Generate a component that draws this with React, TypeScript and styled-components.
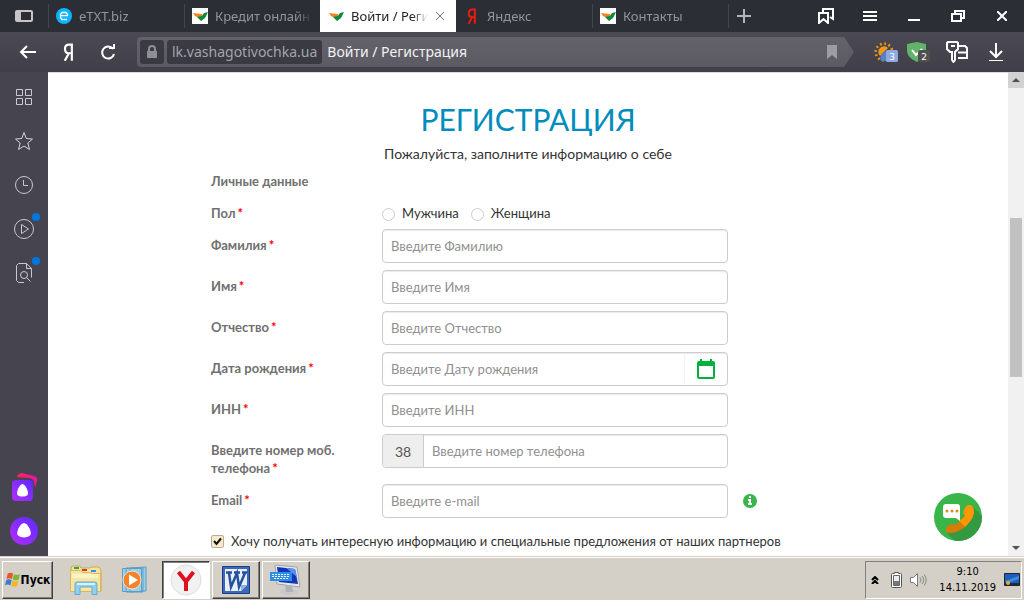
import React from 'react';
import styled, { createGlobalStyle, css } from 'styled-components';

const Global = createGlobalStyle`
  *, *::before, *::after { box-sizing: border-box; }
  html, body { margin: 0; padding: 0; }
  body { font-family: "Lato", "Liberation Sans", sans-serif; font-size: 13px; color: #333; background: #fff; }
  button { font: inherit; color: inherit; margin: 0; padding: 0; border: 0; background: none; display: inline-flex; align-items: center; justify-content: center; }
  a { color: inherit; text-decoration: none; }
  svg { display: block; flex: none; }
`;

const chromeFont = css`font-family: "Noto Sans", "Open Sans", sans-serif;`;

const Screen = styled.div`
  display: flex;
  flex-direction: column;
  min-height: 100vh;
`;

/* ---------- tab strip ---------- */
const TabStrip = styled.header`
  ${chromeFont}
  display: flex;
  height: 32px;
  background: #2c2e36;
`;
const PanelButton = styled.button`
  width: 48px;
  flex: none;
`;
const Tabs = styled.nav`
  display: flex;
  flex: 1;
  min-width: 0;
  max-width: 680px;
`;
const Tab = styled.a<{ $active?: boolean; $line?: boolean }>`
  flex: 1 1 136px;
  min-width: 0;
  display: flex;
  align-items: center;
  gap: 7px;
  padding: 0 ${p => (p.$active ? 11 : 8)}px 0 8px;
  font-size: 13px;
  color: ${p => (p.$active ? '#222' : '#94959b')};
  background: ${p => (p.$active ? '#fff' : 'linear-gradient(#44464e, #44464e) left center / 1px 24px no-repeat')};
  ${p => p.$line === false && 'background: none;'}
`;
const TabIcon = styled.span`
  width: 16px;
  flex: none;
  display: flex;
  justify-content: center;
`;
const TabTitle = styled.span`
  flex: 1;
  min-width: 0;
  overflow: hidden;
  white-space: nowrap;
  mask-image: linear-gradient(to right, #000 calc(100% - 16px), transparent);
`;
const NewTab = styled.button`
  width: 32px;
  flex: none;
  background: linear-gradient(#44464e, #44464e) left center / 1px 24px no-repeat;
`;
const WindowButtons = styled.div`
  display: flex;
  margin-left: auto;
  button { width: 44px; }
`;

/* ---------- toolbar ---------- */
const Toolbar = styled.div`
  ${chromeFont}
  display: flex;
  align-items: center;
  height: 40px;
  padding: 0 12px 0 8px;
  background: linear-gradient(#4b4a54, #403f48);
`;
const ToolButton = styled.button`
  width: 40px;
  height: 32px;
`;
const AddressBar = styled.div`
  flex: 1;
  min-width: 0;
  display: flex;
  align-items: center;
  gap: 3px;
  height: 30px;
  margin-left: 9px;
  padding: 0 17px 0 3px;
  border-radius: 4px 0 0 4px;
  background: linear-gradient(#63626b, #5c5b63);
  clip-path: polygon(0 0, calc(100% - 10px) 0, 100% 50%, calc(100% - 10px) 100%, 0 100%);
`;
const Lock = styled.span`
  display: flex;
  align-items: center;
  justify-content: center;
  width: 24px;
  height: 24px;
  border-radius: 3px;
  background: #3a3a43;
`;
const Domain = styled.span`
  height: 24px;
  padding: 0 5px;
  line-height: 24px;
  font-size: 14px;
  border-radius: 3px;
  color: #a4a4aa;
  background: #3a3a43;
`;
const PageName = styled.span`
  flex: 1;
  padding-left: 2px;
  font-size: 14px;
  line-height: 24px;
  color: #f2f2f4;
  white-space: nowrap;
`;
const Extensions = styled.div`
  display: grid;
  grid-template-columns: 32px 32px 46px 32px;
  margin-left: 16px;
  button { height: 32px; }
`;

/* ---------- body ---------- */
const Body = styled.div`
  flex: 1;
  display: flex;
  min-height: 0;
`;
const Sidebar = styled.aside`
  width: 48px;
  flex: none;
  display: flex;
  flex-direction: column;
  align-items: center;
  padding: 7px 0;
  gap: 8px;
  background: #46454f;
  button { width: 32px; height: 36px; position: relative; }
`;
const Dot = styled.i`
  position: absolute;
  top: 2px;
  right: 0;
  width: 8px;
  height: 8px;
  border-radius: 50%;
  background: #0077de;
`;
const Spacer = styled.div`flex: 1;`;
const Page = styled.main`
  position: relative;
  flex: 1;
  min-width: 0;
  border-top: 1px solid #dcdcdc;
  padding: 24px 16px 0;
  background: #fff;
`;
const Title = styled.h1`
  margin: 0;
  font-size: 30px;
  line-height: 44px;
  font-weight: 400;
  text-align: center;
  color: #008dbd;
`;
const Lead = styled.p`
  margin: 3px 0 0;
  font-size: 14px;
  line-height: 20px;
  text-align: center;
`;
const Form = styled.form`
  max-width: 634px;
  margin: 0 auto;
`;
const Section = styled.h2`
  margin: 8px 0 14px;
  font-size: 13px;
  line-height: 18px;
  font-weight: 700;
  color: #707070;
`;
const FormRow = styled.div<{ $gap?: number }>`
  display: grid;
  grid-template-columns: 171px 346px 1fr;
  align-items: start;
  margin-bottom: ${p => p.$gap ?? 7}px;
`;
const labelText = css`
  font-size: 13px;
  line-height: 18px;
  font-weight: 700;
  color: #707070;
`;
const FieldLabel = styled.label`
  ${labelText}
  padding: 7px 24px 0 0;
`;
const GroupLabel = styled.span`${labelText}`;
const Star = styled.span`
  margin-left: 2px;
  color: #f00;
`;
const Box = styled.div`
  display: flex;
  height: 34px;
  overflow: hidden;
  border: 1px solid #ccc;
  border-radius: 4px;
  background: #fff;
  box-shadow: inset 0 1px 1px rgba(0, 0, 0, 0.08);
`;
const Input = styled.input`
  flex: 1;
  min-width: 0;
  padding: 0 8px;
  border: 0;
  outline: 0;
  background: none;
  font: 13px "Lato", sans-serif;
  color: #555;
  &::placeholder { color: #909090; opacity: 1; }
`;
const Prefix = styled.span`
  width: 41px;
  display: flex;
  align-items: center;
  justify-content: center;
  border-right: 1px solid #ccc;
  background: #eee;
  font-size: 14px;
  color: #555;
`;
const DateButton = styled.button`
  width: 43px;
  padding-right: 1px;
  border-left: 1px solid #f4f4f4;
`;
const InfoButton = styled.button`
  width: 14px;
  height: 34px;
  margin-left: 15px;
`;
const Choices = styled.div`
  display: flex;
  gap: 12px;
`;
const Choice = styled.label`
  display: flex;
  align-items: center;
  gap: 7px;
  font-size: 13px;
  line-height: 18px;
`;
const Radio = styled.input`
  appearance: none;
  width: 13px;
  height: 13px;
  margin: 2px 0 0;
  border: 1px solid #ccc;
  border-radius: 50%;
  background: #fff;
  &:checked { border: 4px solid #39b54a; }
`;
const Agree = styled.label`
  display: flex;
  align-items: center;
  gap: 7px;
  font-size: 13px;
  line-height: 18px;
  white-space: nowrap;
`;
const Check = styled.span`
  display: grid;
  width: 13px;
  height: 13px;
  > * { grid-area: 1 / 1; margin: 0; }
  svg { visibility: hidden; pointer-events: none; }
  input:checked + svg { visibility: visible; }
`;
const CheckInput = styled.input`
  appearance: none;
  width: 13px;
  height: 13px;
  border: 1px solid #b9ad98;
  border-radius: 2px;
  background: #fbe9cb;
`;
const CallButton = styled.button`
  position: absolute;
  right: 26px;
  bottom: 15px;
`;
const Scrollbar = styled.div`
  width: 16px;
  flex: none;
  display: flex;
  flex-direction: column;
  background: #f1f1f1;
  button { height: 16px; }
`;
const ScrollUp = styled.button`background: #d2d2d2;`;
const Track = styled.div`
  flex: 1;
  display: grid;
  grid-template-rows: 130fr 159fr 163fr;
`;
const Thumb = styled.div`
  grid-row: 2;
  margin: 0 2px;
  background: #c1c1c1;
`;

/* ---------- taskbar ---------- */
const Taskbar = styled.footer`
  display: flex;
  align-items: center;
  height: 44px;
  padding: 2px 0 0 2px;
  background: #d4d0c8;
  border-top: 1px solid #d4d0c8;
  box-shadow: inset 0 1px 0 #fff;
  font-family: "DejaVu Sans Condensed", "DejaVu Sans", sans-serif;
  color: #000;
`;
const Start = styled.button`
  width: 51px;
  height: 38px;
  gap: 1px;
  font-size: 12px;
  font-weight: 700;
  border: 1px solid;
  border-color: #fff #404040 #404040 #fff;
  box-shadow: inset -1px -1px 0 #808080;
`;
const Launch = styled.div`
  display: flex;
  gap: 2px;
  margin: 0 2px 0 9px;
  button { width: 48px; height: 38px; }
`;
const TaskButton = styled.button<{ $active?: boolean }>`
  width: 48px;
  height: 38px;
  margin-right: 2px;
  border: 1px solid;
  border-color: ${p => (p.$active ? '#404040 #fff #fff #404040' : '#fff #404040 #404040 #fff')};
  box-shadow: ${p => (p.$active ? 'inset 1px 1px 0 #808080' : 'inset -1px -1px 0 #808080')};
  background: ${p => (p.$active ? '#fff' : '#d4d0c8')};
`;
const Tray = styled.div`
  display: flex;
  align-items: center;
  height: 38px;
  margin: 0 2px 0 auto;
  padding: 0 1px 0 5px;
  gap: 8px;
  border: 1px solid;
  border-color: #808080 #fff #fff #808080;
`;
const TrayToggle = styled.button`
  margin-right: 4px;
`;
const Clock = styled.time`
  margin-left: 4px;
  font-size: 11px;
  line-height: 16px;
  text-align: center;
`;

/* ---------- drawings ---------- */
const Bird = () => (
  <svg width="16" height="16" viewBox="0 0 16 16">
    <path fill="#fff" d="M0 0h16v16H0z" />
    <path fill="#f58220" d="M1 5l9 1 1 2-4 2-4-2z" />
    <path fill="#0a8a3c" d="M5 9l5-1 2-3 4-1-3 6-4 3z" />
  </svg>
);
const Etxt = () => (
  <svg width="16" height="16" viewBox="0 0 16 16">
    <circle cx="8" cy="8" r="8" fill="#0ab4ff" />
    <path fill="none" stroke="#fff" strokeWidth="1.3" d="M4.5 7.7h7V6.500L10 4.500H6L4.500 6.500v3L6 11.500h5" />
  </svg>
);
const Ya = ({ color, size = 18 }: { color: string; size?: number }) => (
  <svg width={size * 0.6} height={size} viewBox="0 0 11 18">
    <path fill="none" stroke={color} strokeWidth="2.200" d="M9 18V1.500H6.500C3 1.500 2 3.500 2 6s1.200 4.300 4 4.300H9M6 10.300L1.800 18" />
  </svg>
);
const Stroke = ({ size = 18, w = 2, color = '#fff', d }: { size?: number; w?: number; color?: string; d: string }) => (
  <svg width={size} height={size} viewBox={`0 0 ${size} ${size}`} fill="none" stroke={color} strokeWidth={w}>
    <path d={d} />
  </svg>
);
const Weather = () => (
  <svg width="24" height="20" viewBox="0 0 24 20">
    <circle cx="10" cy="10" r="8.300" fill="none" stroke="#f59a10" strokeWidth="2.600" strokeDasharray="1.700 2.650" />
    <path d="M6 14a5 5 0 0 1 8-8z" fill="#f59a10" />
    <path d="M7 19a7 7 0 0 1 6-10v10z" fill="#5b7fc4" />
    <rect x="12" y="8" width="12" height="12" rx="1.500" fill="#90a9e2" />
    <text x="18" y="18" fill="#fff" fontFamily="DejaVu Sans" fontSize="9" textAnchor="middle">3</text>
  </svg>
);
const Shield = () => (
  <svg width="24" height="20" viewBox="0 0 24 20">
    <path d="M1 2l10-2 9 2v6c0 6-4 9-9 12C5 17 1 14 1 8z" fill="#62b26c" />
    <path d="M6 8l4 5 6-6" fill="none" stroke="#fff" strokeWidth="2" />
    <rect x="12" y="8" width="12" height="12" rx="2" fill="#505050" />
    <text x="18" y="18" fill="#fff" fontFamily="DejaVu Sans" fontSize="9" textAnchor="middle">2</text>
  </svg>
);
const KeyIcon = () => (
  <svg width="22" height="22" viewBox="0 0 22 22" fill="none" stroke="#fff" strokeWidth="2">
    <path d="M2 1h9l1 1v6l-3 3v8l-1.500 2L6 19v-8H4L1 8V2z" />
    <path d="M5 5h4M13 5h6l2 2v10h-9M12 11.500h9" />
  </svg>
);
const Alice = ({ square }: { square?: boolean }) => (
  <svg width="28" height="28" viewBox="0 0 28 28">
    <defs>
      <linearGradient id="violet" x1="1" y1="0" x2="0" y2="1"><stop offset="0" stopColor="#5a2cff" /><stop offset="1" stopColor="#b52cff" /></linearGradient>
      <linearGradient id="pink"><stop offset="0" stopColor="#ff2560" /><stop offset="1" stopColor="#f010a8" /></linearGradient>
    </defs>
    {square ? (
      <>
        <path fill="url(#pink)" d="M7 4Q8 0 12 0l12 3q4 1 3 5l-2 7-1-7q-1-2-4-3z" />
        <rect x="2" y="7" width="21" height="21" rx="4" fill="url(#violet)" />
        <path fill="#fff" d="M12.500 11c3 0 7 9 5 11s-8 2-10 0 2-11 5-11z" />
      </>
    ) : (
      <>
        <circle cx="14" cy="14" r="14" fill="url(#violet)" />
        <path fill="#fff" d="M14 6c3.500 0 9 10 6 12.500s-9 2.500-12 0S10.500 6 14 6z" />
      </>
    )}
  </svg>
);
const Calendar = () => (
  <svg width="18" height="20" viewBox="0 0 18 20">
    <path fill="#00b140" fillRule="evenodd" d="M3 0h2v2h8V0h2v2h1a2 2 0 0 1 2 2v14a2 2 0 0 1-2 2H2a2 2 0 0 1-2-2V4a2 2 0 0 1 2-2h1zM2 7v11h14V7z" />
  </svg>
);
const Info = () => (
  <svg width="14" height="14" viewBox="0 0 14 14">
    <circle cx="7" cy="7" r="7" fill="#39b54a" />
    <path fill="#fff" d="M6 2h2v2H6zM5 5h3v4h1v2H5V9h1V7H5z" />
  </svg>
);
const Phone = () => (
  <svg width="48" height="48" viewBox="0 0 48 48">
    <defs><clipPath id="disc"><circle cx="24" cy="24" r="24" /></clipPath></defs>
    <circle cx="24" cy="24" r="24" fill="#39b54a" />
    <path clipPath="url(#disc)" fill="#339a42" d="M38 13l14 14v26H26L13 40l13-12z" />
    <path fill="#ff9800" d="M35 12q5 0 5 7c0 5-4 10-9 15l-6-6c3-2 5-4 6-6-2-1-2-3-1-5q2-5 5-5z" />
    <path fill="#d97b06" d="M25 28l6 6c-5 4-10 6-16 6q-4-1-3-4 2-5 6-5l3 1c2-1 3-2 4-4z" />
    <path fill="#fff" d="M12 11h11q3 0 3 3v14l-4-3H12q-3 0-3-3v-8q0-3 3-3z" />
    <g fill="#e68a1a"><circle cx="13" cy="18" r="1.500" /><circle cx="18" cy="18" r="1.500" /><circle cx="23" cy="18" r="1.500" /></g>
  </svg>
);
const Flag = () => (
  <svg width="15" height="15" viewBox="0 0 14 14">
    <path fill="#e8562a" d="M2.500 1.500q2.500-1.500 5 0L6.500 6.500Q4 5 1.500 6.500z" />
    <path fill="#7ab83c" d="M8.200 2q2.800 1.500 5.800 0l-1.200 5q-2.800 1.500-5.600 0z" />
    <path fill="#3b7ad0" d="M1.200 7.500q2.500-1.500 5 0l-1.200 5q-2.500-1.500-5 0z" />
    <path fill="#f4b81e" d="M7 8q2.800 1.500 5.600 0l-1.200 5q-2.800 1.500-5.600 0z" />
  </svg>
);
const Folder = () => (
  <svg width="34" height="32" viewBox="0 0 34 32">
    <path fill="#f5e3a0" stroke="#cda84c" d="M2 4l1-2h8l1 2h9l1-1h8l2 3v21H2z" />
    <path fill="#2ca24c" d="M5 3h5v2H5z" /><path fill="#d03a2c" d="M13 5h5v2h-5z" /><path fill="#3b8ede" d="M22 6h5v2h-5z" />
    <path fill="#f7e6a2" stroke="#d9b85c" d="M1.500 6.500h10l2 2h8l2 1h8v18h-30z" />
    <path fill="#fbf3c8" d="M3 10h26v4H3z" />
    <path fill="#8fd0f0" stroke="#68a9d0" d="M6 30.500V20q0-2 2-2h18q2 0 2 2v10.500h-5V23H11v7.500z" />
    <path fill="#d8f1fc" d="M8 19h18v2H8z" />
  </svg>
);
const Player = () => (
  <svg width="30" height="28" viewBox="0 0 30 28">
    <path fill="#9cd0ea" stroke="#5d9dc4" d="M9 2l16-1v24l-16 1zM5 2h17v24H5zM1.500 2.500h19v23h-19z" />
    <circle cx="11" cy="14" r="9" fill="#f58226" stroke="#e6e6e6" /><path fill="#fff" d="M8 8.500l9 5.500-9 5.500z" />
  </svg>
);
const Yandex = () => (
  <svg width="32" height="32" viewBox="0 0 32 32">
    <circle cx="16" cy="16" r="15" fill="#f1f1f1" stroke="#ddd" />
    <path d="M8.500 8l7.500 9.500L23.500 8M16 17v10" fill="none" stroke="#e01020" strokeWidth="4" />
  </svg>
);
const Word = () => (
  <svg width="28" height="28" viewBox="0 0 28 28">
    <path fill="#3c68b8" stroke="#1d3c80" d="M.5.500h27v27H.500z" />
    <path fill="#e8effa" d="M3 3h22v16l-6 6H3z" /><path fill="#8fb0e4" d="M19 25v-6h6z" />
    <path d="M4 6.500h6M12 6.500h6M20 6.500h5M7 7l2 14 6-14 2 14 6-14" fill="none" stroke="#2450a0" strokeWidth="2.500" />
  </svg>
);
const Keyboard = () => (
  <svg width="32" height="32" viewBox="0 0 32 32">
    <path fill="#e4e6ea" stroke="#a0a4aa" d="M5 1l22 2 3 20-23-3z" />
    <path fill="#1236b8" d="M7 3l18 2 3 15-19-2z" /><path fill="#5b8cf0" d="M16 4l9 1 2 8z" />
    <ellipse cx="19" cy="28" rx="9" ry="3" fill="#c6c8cc" /><path fill="#b0b4ba" d="M15 21h7l1 7h-7z" />
    <path fill="#2e8ee6" d="M0 8h22v9H0z" />
    <path stroke="#fff" strokeDasharray="2 1" d="M2 10.500h18M2 12.500h18M4 14.500h14" />
  </svg>
);
const Battery = () => (
  <svg width="11" height="16" viewBox="0 0 11 16">
    <path fill="#fff" stroke="#555" d="M3.500.500h4v1h2a1 1 0 0 1 1 1v12a1 1 0 0 1-1 1h-8a1 1 0 0 1-1-1v-12a1 1 0 0 1 1-1h2z" />
    <path fill="#eee" stroke="#666" d="M2.500 3.500h6v10h-6z" /><path fill="#777" d="M3 9h5v4H3z" />
  </svg>
);
const Speaker = () => (
  <svg width="17" height="16" viewBox="0 0 17 16">
    <path fill="#fff" stroke="#777" d="M.500 5.500h3l4-4v13l-4-4h-3z" />
    <path fill="none" stroke="#888" d="M10 5.500q2 2.500 0 5M12 4q3.500 4 0 8M14 2.500q4.500 5.500 0 11" />
  </svg>
);
const Desk = () => (
  <svg width="16" height="13" viewBox="0 0 16 13">
    <path fill="#1d5fc0" stroke="#222" d="M.500.500h15v12H.500z" /><path fill="#3f8ade" d="M1 8l14-5v3L4 10z" />
    <path fill="#1a2a4a" d="M1 10h14v2H1z" /><circle cx="4" cy="10" r="2" fill="#e6b020" />
  </svg>
);

const tabs = [
  { title: 'eTXT.biz', icon: <Etxt /> },
  { title: 'Кредит онлайн н', icon: <Bird /> },
  { title: 'Войти / Регистрация', icon: <Bird />, active: true },
  { title: 'Яндекс', icon: <Ya color="#f21a0c" size={16} />, line: false },
  { title: 'Контакты', icon: <Bird /> },
];

const TextRow = ({ id, label, hint, gap, prefix, inner, after }: {
  id: string; label: string; hint: string; gap?: number;
  prefix?: string; inner?: React.ReactNode; after?: React.ReactNode;
}) => (
  <FormRow $gap={gap}>
    <FieldLabel htmlFor={id}>{label}<Star>*</Star></FieldLabel>
    <Box>
      {prefix && <Prefix>{prefix}</Prefix>}
      <Input id={id} placeholder={hint} />
      {inner}
    </Box>
    {after}
  </FormRow>
);

export default function App() {
  return (
    <Screen>
      <Global />
      <TabStrip>
        <PanelButton aria-label="Панель">
          <svg width="18" height="12" viewBox="0 0 18 12"><path fill="#c8c5c8" fillRule="evenodd" d="M2 0h14a2 2 0 0 1 2 2v8a2 2 0 0 1-2 2H2a2 2 0 0 1-2-2V2a2 2 0 0 1 2-2zm4 2v8h10V2z" /></svg>
        </PanelButton>
        <Tabs>
          {tabs.map(t => (
            <Tab key={t.title} href="#" $active={t.active} $line={t.line}>
              <TabIcon>{t.icon}</TabIcon>
              <TabTitle>{t.title}</TabTitle>
              {t.active && <Stroke size={10} w={1} color="#777" d="M1 1l8 8M9 1l-8 8" />}
            </Tab>
          ))}
        </Tabs>
        <NewTab aria-label="Новая вкладка"><Stroke size={14} w={2} color="#b5b5ba" d="M7 0v14M0 7h14" /></NewTab>
        <WindowButtons>
          <button aria-label="Закладки"><Stroke size={16} w={2} d="M1 5h9v10l-4.500-4L1 15zM5 4V1h10v10l-3-2" /></button>
          <button aria-label="Меню"><Stroke size={14} w={2} d="M0 3h14M0 7h14M0 11h14" /></button>
          <button aria-label="Свернуть"><Stroke size={12} w={2} d="M0 10h12" /></button>
          <button aria-label="Развернуть"><Stroke size={14} w={2} d="M1 5h9v7H1zM4 4V2h9v7h-2" /></button>
          <button aria-label="Закрыть"><Stroke size={10} w={2} d="M0 0l10 10M10 0L0 10" /></button>
        </WindowButtons>
      </TabStrip>

      <Toolbar>
        <ToolButton aria-label="Назад"><Stroke d="M17 9H2M8 3L2 9l6 6" /></ToolButton>
        <ToolButton aria-label="Яндекс"><Ya color="#fff" /></ToolButton>
        <ToolButton aria-label="Обновить"><Stroke w={2} d="M14 6A6 6 0 1 0 15 11M10 5h5V1" /></ToolButton>
        <AddressBar>
          <Lock><svg width="10" height="14" viewBox="0 0 10 14"><path fill="#8e8e96" fillRule="evenodd" d="M1 6V4a4 4 0 0 1 8 0v2h1v7H0V6zm2 0h4V4a2 2 0 0 0-4 0z" /></svg></Lock>
          <Domain>lk.vashagotivochka.ua</Domain>
          <PageName>Войти / Регистрация</PageName>
          <svg width="10" height="14" viewBox="0 0 10 14"><path fill="#9d9ca2" d="M0 0h10v14l-5-4-5 4z" /></svg>
        </AddressBar>
        <Extensions>
          <button aria-label="Погода"><Weather /></button>
          <button aria-label="Защита"><Shield /></button>
          <button aria-label="Пароли"><KeyIcon /></button>
          <button aria-label="Загрузки"><Stroke d="M9 0v13M3 8l6 6 6-6M2 18h14" /></button>
        </Extensions>
      </Toolbar>

      <Body>
        <Sidebar>
          <button aria-label="Табло"><Stroke size={18} w={1} color="#c9c9ce" d="M1.500 1.500h6v6h-6zM10.500 1.500h6v6h-6zM1.500 10.500h6v6h-6zM10.500 10.500h6v6h-6z" /></button>
          <button aria-label="Избранное"><Stroke size={18} w={1} color="#d4d4d8" d="M9 .500l2.300 6 6.200.5-4.700 4 1.700 6.500L9 14l-5.500 3.500L5.200 11 .500 7l6.200-.5z" /></button>
          <button aria-label="История"><Stroke size={18} w={1} color="#c9c9ce" d="M9 .500a8.500 8.500 0 1 1 0 17a8.500 8.500 0 0 1 0-17M8.500 4v5.500H13" /></button>
          <button aria-label="Видео"><Stroke size={20} w={1} color="#c9c9ce" d="M10 .500a9.500 9.500 0 1 1 0 19a9.500 9.500 0 0 1 0-19M7.500 5.500v9l7-4.500z" /><Dot /></button>
          <button aria-label="Поиск"><Stroke size={20} w={1} color="#c9c9ce" d="M10 19.500H4.500l-2-2v-15l2-2h8l5 5v9M12.500.500v5h5M10 8.500a3.500 3.500 0 1 1 0 7a3.500 3.500 0 0 1 0-7M12.500 14.500l4 4" /><Dot /></button>
          <Spacer />
          <button aria-label="Коллекции"><Alice square /></button>
          <button aria-label="Алиса"><Alice /></button>
        </Sidebar>

        <Page>
          <Title>РЕГИСТРАЦИЯ</Title>
          <Lead>Пожалуйста, заполните информацию о себе</Lead>
          <Form>
            <Section>Личные данные</Section>
            <FormRow role="radiogroup" aria-labelledby="sex">
              <GroupLabel id="sex">Пол<Star>*</Star></GroupLabel>
              <Choices>
                <Choice><Radio type="radio" name="sex" />Мужчина</Choice>
                <Choice><Radio type="radio" name="sex" />Женщина</Choice>
              </Choices>
            </FormRow>
            <TextRow id="surname" label="Фамилия" hint="Введите Фамилию" />
            <TextRow id="name" label="Имя" hint="Введите Имя" />
            <TextRow id="patronymic" label="Отчество" hint="Введите Отчество" />
            <TextRow id="birth" label="Дата рождения" hint="Введите Дату рождения"
              inner={<DateButton type="button" aria-label="Календарь"><Calendar /></DateButton>} />
            <TextRow id="inn" label="ИНН" hint="Введите ИНН" />
            <TextRow id="phone" label="Введите номер моб. телефона" hint="Введите номер телефона" prefix="38" />
            <TextRow id="email" label="Email" hint="Введите e-mail" gap={14}
              after={<InfoButton type="button" aria-label="Подсказка"><Info /></InfoButton>} />
            <Agree>
              <Check>
                <CheckInput type="checkbox" defaultChecked />
                <Stroke size={13} w={2} color="#111" d="M3 6l2.500 3L10 3.500" />
              </Check>
              Хочу получать интересную информацию и специальные предложения от наших партнеров
            </Agree>
          </Form>
          <CallButton aria-label="Позвонить"><Phone /></CallButton>
        </Page>

        <Scrollbar>
          <ScrollUp aria-label="Вверх"><svg width="8" height="4" viewBox="0 0 8 4"><path fill="#505050" d="M0 4l4-4 4 4z" /></svg></ScrollUp>
          <Track><Thumb /></Track>
          <button aria-label="Вниз"><svg width="8" height="4" viewBox="0 0 8 4"><path fill="#505050" d="M0 0l4 4 4-4z" /></svg></button>
        </Scrollbar>
      </Body>

      <Taskbar>
        <Start><Flag />Пуск</Start>
        <Launch>
          <button aria-label="Проводник"><Folder /></button>
          <button aria-label="Проигрыватель"><Player /></button>
        </Launch>
        <TaskButton $active aria-label="Yandex"><Yandex /></TaskButton>
        <TaskButton aria-label="Word"><Word /></TaskButton>
        <TaskButton aria-label="Клавиатура"><Keyboard /></TaskButton>
        <Tray>
          <TrayToggle aria-label="Скрытые значки"><Stroke size={8} w={2} color="#000" d="M1 4l3-3 3 3M1 8l3-3 3 3" /></TrayToggle>
          <Battery />
          <Speaker />
          <Clock>9:10<br />14.11.2019</Clock>
          <Desk />
        </Tray>
      </Taskbar>
    </Screen>
  );
}
